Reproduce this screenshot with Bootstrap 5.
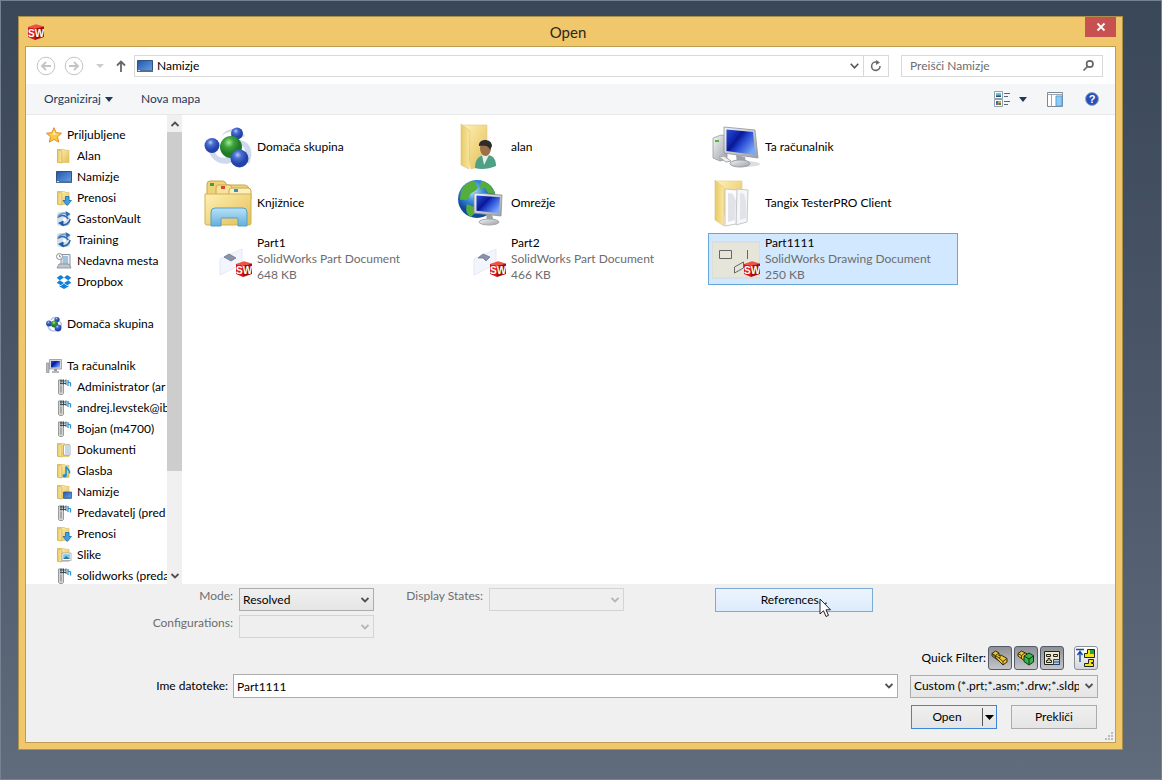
<!DOCTYPE html>
<html lang="sl">
<head>
<meta charset="utf-8">
<meta name="viewport" content="width=device-width, initial-scale=1">
<title>Open</title>
<link rel="stylesheet" href="https://cdn.jsdelivr.net/npm/bootstrap@5.3.0/dist/css/bootstrap.min.css">
<style>
  body { font: 12px/16px Lato, "Open Sans", sans-serif; color: #000; background: linear-gradient(#3a4759, #4d596b 55%, #606b7b) #4d596b; border: 1px solid #758291; }
  svg { display: block; flex: none; overflow: visible; }
  .desk { height: calc(100vh - 2px); padding: 15px 38px 29px 17px; }
  .win { background: #f0c76b; border: 1px solid #ad8f4c; padding: 0 6px 6px; }
  .titlebar { height: 29px; padding-left: 3px; }
  .titlebar h1 { font-size: 15px; line-height: 20px; color: #2c261b; }
  .close-x { width: 31px; height: 20px; background: #c75050; border: 0; right: 0; top: 0; }
  .client { border: 1px solid #bd9d53; background: #fff; }
  .address { height: 37px; padding: 0 12px 0 10px; }
  .box { border: 1px solid #d9d9d9; height: 22px; }
  .crumb { gap: 4px; padding-left: 2px; }
  .refresh { border: 0; border-left: 1px solid #d9d9d9; width: 25px; background: #fff; }
  .plain { border: 0; background: none; padding: 0; color: inherit; }
  .searchbox { width: 202px; margin-left: 12px; }
  .searchbox input { width: 100%; min-width: 0; border: 0; outline: 0; padding: 0 0 0 8px; color: #6d6d6d; }
  .searchbox input::placeholder { color: #6d6d6d; opacity: 1; }
  .tools { height: 31px; background: #f5f6f7; border-bottom: 1px solid #e6e8ea; color: #1e395b; padding: 0 16px 0 18px; }
  .browse { min-height: 0; flex: 1 1 0; }
  .side { width: 141px; padding: 9px 0 0 20px; }
  .side a { height: 21px; gap: 5px; color: #000; text-decoration: none; white-space: nowrap; }
  .side .sub { padding-left: 10px; }
  .gap-row { height: 21px; }
  .scroller { width: 15px; background: #f0f0f0; }
  .scroller .thumb { background: #cdcdcd; height: 78%; }
  .scroller button { height: 17px; }
  .files { grid-template-columns: repeat(auto-fill, 250px); gap: 4px; padding: 6px 0 0 18px; display: grid; align-content: start; }
  .files a { height: 52px; gap: 5px; padding-left: 3px; border: 1px solid transparent; color: #000; text-decoration: none; }
  .files a.picked { background: #d1e8ff; border-color: #66a7d8; }
  .files span { color: #6d6d6d; }
  .files b { font-weight: 400; color: #000; display: block; }
  .panel { background: #f0f0f0; padding: 4px 17px 13px 0; }
  .opts { display: grid; grid-template-columns: 207px 135px 103px 135px 79px 158px; column-gap: 6px; row-gap: 3px; align-items: start; }
  .opts label { text-align: right; color: #6d6d6d; }
  .ctl { display: block; height: 23px; width: 100%; border: 1px solid #acacac; border-radius: 0; padding: 0 18px 0 3px; color: #000; appearance: none; background: url("data:image/svg+xml,%3Csvg xmlns='http://www.w3.org/2000/svg' viewBox='0 0 8 6'%3E%3Cpath d='M.5 1 4 4.500 7.500 1' fill='none' stroke='%23505050' stroke-width='1.800'/%3E%3C/svg%3E") no-repeat right 4px center / 8px 6px, linear-gradient(#f0f0f0, #e5e5e5); }
  .ctl:disabled { opacity: 1; border-color: #d4d4d4; background: url("data:image/svg+xml,%3Csvg xmlns='http://www.w3.org/2000/svg' viewBox='0 0 8 6'%3E%3Cpath d='M.5 1 4 4.500 7.500 1' fill='none' stroke='%23b5b5b5' stroke-width='1.800'/%3E%3C/svg%3E") no-repeat right 4px center / 8px 6px #efefef; }
  input.ctl { height: 24px; background: url("data:image/svg+xml,%3Csvg xmlns='http://www.w3.org/2000/svg' viewBox='0 0 8 6'%3E%3Cpath d='M.5 1 4 4.500 7.500 1' fill='none' stroke='%23505050' stroke-width='1.800'/%3E%3C/svg%3E") no-repeat right 4px center / 8px 6px #fff; }
  .push { height: 24px; border: 1px solid #acacac; background: linear-gradient(#f0f0f0, #e5e5e5); padding: 0; color: #000; }
  .push.hot { border-color: #7eaad8; background: linear-gradient(#ecf4fc, #dcecfc); }
  .pair { width: 86px; }
  .pair.main { border-color: #3c86d8; }
  .pair.main .cut { width: 14px; height: 18px; border-left: 1px solid #555; }
  .actions { gap: 14px; padding: 7px 1px 0 0; }
  .toggles { gap: 2px; }
  .tog { width: 24px; height: 24px; border: 1px solid #555b66; border-radius: 3px; background: linear-gradient(#8e9198, #c3c5c9); padding: 0; display: flex; align-items: center; justify-content: center; }
  .tog.off { background: linear-gradient(#fff, #d3d6dc); border-color: #8b9098; }
  .row-name { padding-top: 4px; }
  .name-label { width: 207px; padding-right: 5px; text-align: right; }
  .filter { width: 188px; margin-left: 12px; }
  .cursor { left: 104px; top: 10px; }
  .grip { right: 2px; bottom: 2px; }
</style>
</head>
<body class="min-vh-100">
<svg width="0" height="0" class="position-absolute" aria-hidden="true">
  <defs>
    <linearGradient id="gy" x2="1" y2="1"><stop stop-color="#fff0b4"/><stop offset="1" stop-color="#e3bf55"/></linearGradient>
    <linearGradient id="gy2"><stop stop-color="#e9c964"/><stop offset="1" stop-color="#f9e9a4"/></linearGradient>
    <linearGradient id="gs" x2="1" y2=".7"><stop stop-color="#2a50d8"/><stop offset=".38" stop-color="#0b1fa6"/><stop offset=".42" stop-color="#0a1790"/><stop offset=".6" stop-color="#2447d4"/><stop offset="1" stop-color="#7aa6f5"/></linearGradient>
    <linearGradient id="gd" x2="1" y2="1"><stop stop-color="#2456a8"/><stop offset="1" stop-color="#69a2e8"/></linearGradient>
    <linearGradient id="gm" x2="1" y2="1"><stop stop-color="#f4f5f6"/><stop offset="1" stop-color="#9ba0a6"/></linearGradient>
    <linearGradient id="gl" x2="0" y2="1"><stop stop-color="#b9e2f6"/><stop offset="1" stop-color="#62b0df"/></linearGradient>
    <radialGradient id="bb" cx=".4" cy=".3"><stop stop-color="#b5c8f5"/><stop offset=".4" stop-color="#4a6fd4"/><stop offset="1" stop-color="#2443a8"/></radialGradient>
    <radialGradient id="bg" cx=".4" cy=".3"><stop stop-color="#a8e79b"/><stop offset=".45" stop-color="#3da53c"/><stop offset="1" stop-color="#1f7a28"/></radialGradient>
    <radialGradient id="be" cx=".4" cy=".3"><stop stop-color="#b4e6fb"/><stop offset=".5" stop-color="#3f8fdc"/><stop offset="1" stop-color="#114a9c"/></radialGradient>
  </defs>
  <symbol id="sw" viewBox="0 0 16 16"><path d="M0 3 8 .2 16 2.500 7 4.500z" fill="#f0503f"/><path d="M0 3 7 4.500V16L0 13z" fill="#d41a14"/><path d="M7 4.500 16 2.500V13l-9 3z" fill="#a80d0d"/><text x="0" y="13" font-size="10" font-weight="700" fill="#fff" font-family="Liberation Sans">S</text><text x="6.800" y="13" font-size="10" font-weight="700" fill="#fff" font-family="Liberation Sans">W</text></symbol>
  <symbol id="fold" viewBox="0 0 16 16"><path d="M1.500 1.500 6 1v14l-4.500-.7z" fill="#d9b64e"/><path d="M3 1.500h5.500l1 .8h3.500v12.200H5z" fill="url(#gy)" stroke="#d9bb5f" stroke-width=".6"/><path d="M1.500 1.500 5.800 3v12l-4.300-.7z" fill="url(#gy2)" stroke="#c9a443" stroke-width=".6"/></symbol>
  <symbol id="desk" viewBox="0 0 16 16"><path d="M.5 2.500h15v11H.5z" fill="url(#gd)" stroke="#32537f"/><path d="M0 12h16v2H0z" fill="#54708e"/><path d="M1 12.500h2" stroke="#c6e0ee"/></symbol>
  <symbol id="down" viewBox="0 0 16 16"><use href="#fold"/><path d="M9.500 6.500h3.500v4h2.500L11.200 15.500 7 10.500h2.500z" fill="#3da0e8" stroke="#1a6cae" stroke-width=".8"/></symbol>
  <symbol id="vault" viewBox="0 0 16 16"><rect x="1" y="1" width="13" height="14" rx="3" fill="#d0e0ef"/><path d="M2 7a6 5 0 0 1 9-4" fill="none" stroke="#7398c0" stroke-width="1.600"/><path d="M9.500 0 14.500 3l-4 3z" fill="#2c6cb4"/><path d="M3 6c3-3 8-1 9 2M14 8a6.500 6 0 0 1-8.500 5.500" fill="none" stroke="#2f67aa" stroke-width="1.600"/><path d="M7.500 9.500v6L2 12z" fill="#1e5ba3"/><circle cx="8.500" cy="8.500" r="1.800" fill="#fff"/></symbol>
  <symbol id="recent" viewBox="0 0 16 16"><path d="M5 1.500h9v12H5z" fill="#eef3f7" stroke="#8c9299"/><path d="M6.500 4H12M6.500 6H12M6.500 8H12M6.500 10H12" stroke="#5b8fc0"/><path d="M3 11h10l2 4H1z" fill="#bfc7cc" stroke="#868d92" stroke-width=".8"/><circle cx="3.500" cy="3.500" r="3" fill="#fff" stroke="#8b8f94"/><path d="M3.500 1.800v1.900h1.500" fill="none" stroke="#666" stroke-width=".7"/></symbol>
  <symbol id="drop" viewBox="0 0 16 16"><path d="M4.700 1 8 3.500 3.800 6.200.7 3.800zM11.300 1 8 3.500l4.200 2.700 3.100-2.400zM.7 8.700l3.100-2.500L8 8.900l-3.300 2.300zM15.300 8.700l-3.100-2.500L8 8.900l3.300 2.300zM8 9.700l3.400 2.400 1.100-.7v1L8 15l-4.500-2.600v-1l1.100.7z" fill="#1081de"/></symbol>
  <symbol id="star" viewBox="0 0 16 16"><path d="m8 .7 2.200 5 5.300.5-4 3.600 1.200 5.300L8 12.400l-4.700 2.700 1.200-5.300-4-3.600 5.300-.5z" fill="#fcca3e" stroke="#e08b24"/><path d="m8 3 1.500 3.700 3.400.2-4.900 1-3.500-.9 2.300-.3z" fill="#ffeb9b"/></symbol>
  <symbol id="home" viewBox="0 0 48 48"><path d="M18 13C21 4 36 4 41 13l-4 2C34 8 23 7 18 13zM4 24c2 17 18 20 26 14l-5-5c-6 4-14 1-15-7zM36 17c11 2 14 12 9 24l-6-6c3-7 3-11-3-13z" fill="#c3cfe8" opacity=".8"/><circle cx="33" cy="10.500" r="6" fill="url(#bb)"/><circle cx="8" cy="22.500" r="7.500" fill="url(#bb)"/><circle cx="27" cy="24" r="11" fill="url(#bg)"/><circle cx="35.500" cy="35.500" r="9" fill="url(#bb)"/></symbol>
  <symbol id="homes" viewBox="0 0 16 16"><path d="M5 4c2-4 8-3 8 1M2 10c1 5 6 6 9 4M13 5c3 2 3 5 1 8" fill="none" stroke="#b7c6e6" stroke-width="1.500"/><circle cx="11" cy="3.500" r="2.600" fill="url(#bb)"/><circle cx="3" cy="7.500" r="2.900" fill="url(#bb)"/><circle cx="8.500" cy="8" r="3.600" fill="url(#bg)"/><circle cx="12" cy="12" r="3.400" fill="url(#bb)"/></symbol>
  <symbol id="pc" viewBox="0 0 48 48"><ellipse cx="33" cy="41" rx="15" ry="3" fill="#bcbcbc" opacity=".5"/><path d="m1 15 8-3 6 1v23l-7 2-7-3z" fill="url(#gm)" stroke="#8b9095" stroke-width=".7"/><path d="M3 18h4" stroke="#4cb83c" stroke-width="2"/><path d="m12 33 7 5-5 1-7-5z" fill="#eee" stroke="#aaa"/><path d="m24 32 9 2 1 6h-9z" fill="#9ea3a8"/><ellipse cx="28" cy="40.500" rx="10" ry="3.500" fill="url(#gm)" stroke="#9aa0a5"/><path d="m12 4 31 3 3 28-34-5z" fill="url(#gm)" stroke="#8d9297" stroke-width=".8"/><path d="m14.500 6.500 26.500 2.500 2.500 23L14.500 28z" fill="url(#gs)"/></symbol>
  <symbol id="pcs" viewBox="0 0 16 16"><path d="M.5 5h2.500v9.500H.5z" fill="#b7bcc1" stroke="#787e83" stroke-width=".6"/><path d="M3.500 1.500h12v9.500h-12z" fill="#d6dade" stroke="#8f969c" stroke-width=".8"/><path d="M5 3h9v6.500H5z" fill="url(#gs)"/><path d="M8 11h3v2H8z" fill="#999"/><path d="M6 13h7v2H6z" fill="#b5b9be"/></symbol>
  <symbol id="dev" viewBox="0 0 16 16"><path d="M2.500 1h5v13.500l-1 1h-3l-1-1z" fill="#d4d4d2" stroke="#858585" stroke-width=".8"/><path d="M5 6.500v7" stroke="#9a9a9a" stroke-width="1.500"/><path d="M4 2h6M4 4.500h6M5 .5v5M7.500.5v5M10 .5V6" stroke="#31434f" stroke-width=".9"/><path d="M8 3h3" stroke="#77b9dc"/><path d="M12 7V1M12 3l2.500 1v3.500" fill="none" stroke="#2e92d2" stroke-width="1.300"/></symbol>
  <symbol id="docs" viewBox="0 0 16 16"><use href="#fold"/><path d="M7.500 3h6.500v10H7.500z" fill="#fff" stroke="#8f9fae" stroke-width=".8"/><path d="M9 5h4M9 7h4M9 9h4M9 11h4" stroke="#6a99cf" stroke-width=".8"/></symbol>
  <symbol id="music" viewBox="0 0 16 16"><use href="#fold"/><path d="M10 12.500V3.500c1 3 4.500 3 3.500 7" fill="none" stroke="#2291cf" stroke-width="1.600"/><ellipse cx="8.700" cy="12.800" rx="2.200" ry="1.800" fill="#2291cf"/></symbol>
  <symbol id="folddesk" viewBox="0 0 16 16"><use href="#fold"/><path d="M7.500 8h8v6h-8z" fill="url(#gd)" stroke="#365b90" stroke-width=".8"/><path d="M7.500 13.500h8v1.500h-8z" fill="#587ba3"/></symbol>
  <symbol id="pics" viewBox="0 0 16 16"><use href="#fold"/><path d="M6 6h9v7.500H6z" fill="#fff" stroke="#9aa5ad" stroke-width=".8"/><path d="M7.200 7.200h6.600V12H7.200z" fill="#7bc4ea"/><path d="m7.200 12 3-3 3.600 3z" fill="#35749a"/></symbol>
  <symbol id="user" viewBox="0 0 48 48"><path d="M5 2h24v40l-16 4z" fill="url(#gy)" stroke="#e1cb83" stroke-width=".6"/><path d="m3 1 9 7-1 38L3 42z" fill="url(#gy2)" stroke="#dcc173" stroke-width=".6"/><path d="M17 45c0-9 4-12 9-13h4c6 1 8 5 8 11-7 3-15 4-21 2z" fill="#4ea184"/><path d="m24 32 2 10 5-10-3-2z" fill="#e7efea"/><ellipse cx="27.500" cy="25.500" rx="5.500" ry="7.500" fill="#9c7048"/><path d="M21 23c-1-8 13-8 13 0l-2 4c-1-4-4-5-11-4z" fill="#2c2c2c"/></symbol>
  <symbol id="net" viewBox="0 0 48 48"><circle cx="19" cy="20" r="19" fill="url(#be)"/><path d="M3 12C7 4 14 2 17 2c-1 4 5 4 2 8s-7 3-8 8-6 2-9 3zM23 2c8 1 13 8 14 13l-7-1-3-5-5 1zM9 25l7 3 1 6-4 4c-4-2-6-6-4-13z" fill="#55ad3b"/><path d="m28 35 6 1 2 6h-7z" fill="#9ea3a8"/><ellipse cx="31" cy="43" rx="10" ry="3" fill="url(#gm)" stroke="#a4a8ac"/><path d="m16 14 28 2-1 21-27-3z" fill="url(#gm)" stroke="#8d9297" stroke-width=".8"/><path d="m18.500 16.500 23.500 1.700-1 16-22.500-2.500z" fill="url(#gs)"/></symbol>
  <symbol id="libs" viewBox="0 0 48 48"><path d="M3 5q0-3 3-3h13q2 0 4 4h18q4 1 4 4v30H3z" fill="#efd37a" stroke="#caa64a"/><path d="M12 9q0-3 2-3h12l4 5h15v8H12z" fill="#f6e29a" stroke="#caa64a"/><path d="M25 12q0-3 2-3h17q3 0 3 3v8H25z" fill="#fbefc0" stroke="#caa64a"/><path d="M6 4h4v3H6z" fill="#4b9b46"/><path d="M17 7h4v3h-4z" fill="#cf4a35"/><path d="M30 10h4v3h-4z" fill="#3b8ec4"/><path d="M1 15h46v29q0 2-2 2H3q-2 0-2-2z" fill="url(#gy)" stroke="#d3b04f"/><path d="M7 47V33q0-4 4-4h28q4 0 4 4v14H34v-7q0-1-1-1H18q-1 0-1 1v7z" fill="url(#gl)" stroke="#579fc7"/></symbol>
  <symbol id="papers" viewBox="0 0 48 48"><path d="M5 2h25v37l-15 5z" fill="url(#gy)" stroke="#e1cb83" stroke-width=".6"/><path d="m24 10 12 1-1 32-11 3z" fill="#f6f6f8" stroke="#c6c8cc"/><path d="m13 10 12 1-1 34-11 2z" fill="#fcfcfd" stroke="#c6c8cc"/><path d="m16 14 5 1 3 7-1 19-7 2zM28 14l4 1 2 7v17l-6 2z" fill="#e1e3e8"/><path d="m3 1 9 8v38l-9-6z" fill="url(#gy2)" stroke="#dcc173" stroke-width=".6"/></symbol>
  <symbol id="part" viewBox="0 0 48 48"><path d="m16 24 22-10v15L16 40z" fill="#f2f5fc" stroke="#dce4f4" stroke-width=".8"/><path d="m20 22 5-3 7 4-5 3z" fill="#8a93ab" stroke="#6f7890" stroke-width=".8"/><use href="#sw" x="32" y="26" width="16" height="16"/></symbol>
  <symbol id="part2" viewBox="0 0 48 48"><path d="m16 24 22-10v15L16 40z" fill="#f2f5fc" stroke="#dce4f4" stroke-width=".8"/><path d="m20 23 5-4 7 3-4 4-3-3z" fill="#8a93ab" stroke="#6f7890" stroke-width=".8"/><use href="#sw" x="32" y="26" width="16" height="16"/></symbol>
  <symbol id="drawing" viewBox="0 0 48 48"><path d="M0 7h48v36H0z" fill="#e5e5da" stroke="#d5d8d2"/><path d="M7.500 15.500h12v8h-12zM35.500 15v9M22.500 32l9-5v6l-9 5z" fill="none" stroke="#666"/><use href="#sw" x="32" y="26" width="16" height="16"/></symbol>
</svg>

<div class="desk d-flex flex-column">
<main class="win d-flex flex-column flex-grow-1">
  <header class="titlebar position-relative d-flex align-items-center">
    <svg width="16" height="16"><use href="#sw"/></svg>
    <h1 class="flex-grow-1 text-center m-0 fw-normal pe-4">Open</h1>
    <button class="close-x position-absolute d-flex align-items-center justify-content-center p-0" aria-label="Close"><svg width="8" height="8"><path d="m.5.5 7 7m0-7-7 7" stroke="#fff" stroke-width="1.800"/></svg></button>
  </header>
  <div class="client d-flex flex-column flex-grow-1">
    <div class="address d-flex align-items-center">
      <button class="plain" aria-label="Back"><svg width="20" height="20" fill="none" stroke="#c4c4c4"><circle cx="10" cy="10" r="8.800"/><path d="M15 10H6m4-4-4 4 4 4" stroke-width="1.800"/></svg></button>
      <button class="plain ms-2" aria-label="Forward"><svg width="20" height="20" fill="none" stroke="#c4c4c4"><circle cx="10" cy="10" r="8.800"/><path d="M5 10h9m-4-4 4 4-4 4" stroke-width="1.800"/></svg></button>
      <button class="plain px-2 ms-1" aria-label="Recent"><svg width="8" height="4"><path d="M0 0h8L4 4z" fill="#ccc"/></svg></button>
      <button class="plain ms-1 me-2" aria-label="Up"><svg width="10" height="12" fill="none" stroke="#666" stroke-width="1.800"><path d="M5 12V1.500M1 5.500l4-4 4 4"/></svg></button>
      <div class="box crumb d-flex align-items-center flex-grow-1">
        <svg width="16" height="16"><use href="#desk"/></svg>
        <span class="flex-grow-1">Namizje</span>
        <button class="plain" aria-label="History"><svg width="9" height="6"><path d="m.7.8 3.800 4L8.300.8" fill="none" stroke="#555" stroke-width="1.600"/></svg></button>
        <button class="refresh h-100 d-flex align-items-center justify-content-center p-0" aria-label="Refresh"><svg width="12" height="12"><path d="M7 2H5.500a4.200 4.200 0 1 0 4.500 4" fill="none" stroke="#6b6b6b" stroke-width="1.600"/><path d="M6 0v5l4-2.500z" fill="#6b6b6b"/></svg></button>
      </div>
      <div class="box searchbox d-flex align-items-center">
        <input type="search" placeholder="Preišči Namizje" aria-label="Preišči Namizje">
        <svg class="me-2" width="11" height="11" fill="none" stroke="#666" stroke-width="1.700"><circle cx="6.800" cy="4" r="3.200"/><path d="m4.500 6.500-4 4"/></svg>
      </div>
    </div>
    <div class="tools d-flex align-items-center">
      <button class="plain d-flex align-items-center gap-1">Organiziraj <svg width="8" height="5"><path d="M0 0h8L4 5z" fill="#1e395b"/></svg></button>
      <button class="plain mx-4 ps-1">Nova mapa</button>
      <button class="plain ms-auto d-flex align-items-center gap-2" aria-label="View"><svg width="17" height="16"><path d="M.5.500h8v7h-8zM.5 8.500h8v7h-8z" fill="#fff" stroke="#93a0ab"/><path d="M2 2h5v3.500H2z" fill="#6cc0d0"/><path d="M2 4.500h5V6H2z" fill="#254f72"/><path d="M2 10h2.500v2H2z" fill="#3867ae"/><path d="M4.500 10H7v2H4.500z" fill="#d2a335"/><path d="M2 12h2.500v2H2z" fill="#a14f75"/><path d="M4.500 12H7v2H4.500z" fill="#35894a"/><path d="M10 2.500h6M10 5.500h4M10 10.500h6M10 13.500h4" stroke="#56697f"/></svg><svg width="8" height="5"><path d="M0 0h8L4 5z" fill="#1e395b"/></svg></button>
      <button class="plain ms-3 me-3 ps-1 pe-1" aria-label="Preview pane"><svg width="18" height="15"><path d="M.5.500h15v14H.5z" fill="#fff" stroke="#7c8791"/><path d="M0 2.500h16M4.500 3v12" stroke="#9aa5af"/><path d="M9 4h6v10H9z" fill="#8dccf7" stroke="#5a9fd6"/></svg></button>
      <button class="plain" aria-label="Help"><svg width="14" height="14"><circle cx="7" cy="7" r="6.500" fill="#2a50b8" stroke="#9aa7c4"/><text x="7" y="11" text-anchor="middle" font-size="11" font-weight="700" fill="#fff" font-family="Liberation Sans">?</text></svg></button>
    </div>
    <div class="browse d-flex overflow-hidden">
      <nav class="side flex-shrink-0 overflow-hidden">
        <a href="#" class="d-flex align-items-center"><svg width="16" height="16"><use href="#star"/></svg>Priljubljene</a>
        <a href="#" class="sub d-flex align-items-center"><svg width="16" height="16"><use href="#fold"/></svg>Alan</a>
        <a href="#" class="sub d-flex align-items-center"><svg width="16" height="16"><use href="#desk"/></svg>Namizje</a>
        <a href="#" class="sub d-flex align-items-center"><svg width="16" height="16"><use href="#down"/></svg>Prenosi</a>
        <a href="#" class="sub d-flex align-items-center"><svg width="16" height="16"><use href="#vault"/></svg>GastonVault</a>
        <a href="#" class="sub d-flex align-items-center"><svg width="16" height="16"><use href="#vault"/></svg>Training</a>
        <a href="#" class="sub d-flex align-items-center"><svg width="16" height="16"><use href="#recent"/></svg>Nedavna mesta</a>
        <a href="#" class="sub d-flex align-items-center"><svg width="16" height="16"><use href="#drop"/></svg>Dropbox</a>
        <div class="gap-row"></div>
        <a href="#" class="d-flex align-items-center"><svg width="16" height="16"><use href="#homes"/></svg>Domača skupina</a>
        <div class="gap-row"></div>
        <a href="#" class="d-flex align-items-center"><svg width="16" height="16"><use href="#pcs"/></svg>Ta računalnik</a>
        <a href="#" class="sub d-flex align-items-center"><svg width="16" height="16"><use href="#dev"/></svg>Administrator (ar</a>
        <a href="#" class="sub d-flex align-items-center"><svg width="16" height="16"><use href="#dev"/></svg>andrej.levstek@ib</a>
        <a href="#" class="sub d-flex align-items-center"><svg width="16" height="16"><use href="#dev"/></svg>Bojan (m4700)</a>
        <a href="#" class="sub d-flex align-items-center"><svg width="16" height="16"><use href="#docs"/></svg>Dokumenti</a>
        <a href="#" class="sub d-flex align-items-center"><svg width="16" height="16"><use href="#music"/></svg>Glasba</a>
        <a href="#" class="sub d-flex align-items-center"><svg width="16" height="16"><use href="#folddesk"/></svg>Namizje</a>
        <a href="#" class="sub d-flex align-items-center"><svg width="16" height="16"><use href="#dev"/></svg>Predavatelj (pred</a>
        <a href="#" class="sub d-flex align-items-center"><svg width="16" height="16"><use href="#down"/></svg>Prenosi</a>
        <a href="#" class="sub d-flex align-items-center"><svg width="16" height="16"><use href="#pics"/></svg>Slike</a>
        <a href="#" class="sub d-flex align-items-center"><svg width="16" height="16"><use href="#dev"/></svg>solidworks (preda</a>
      </nav>
      <div class="scroller d-flex flex-column flex-shrink-0">
        <button class="plain d-flex align-items-center justify-content-center" aria-label="Scroll up"><svg width="8" height="6"><path d="M.5 5 4 1.500 7.500 5" fill="none" stroke="#505050" stroke-width="1.800"/></svg></button>
        <div class="flex-grow-1"><div class="thumb"></div></div>
        <button class="plain d-flex align-items-center justify-content-center" aria-label="Scroll down"><svg width="8" height="6"><path d="M.5 1 4 4.500 7.500 1" fill="none" stroke="#505050" stroke-width="1.800"/></svg></button>
      </div>
      <section class="files flex-grow-1">
        <a href="#" class="d-flex align-items-center"><svg width="48" height="48"><use href="#home"/></svg><b>Domača skupina</b></a>
        <a href="#" class="d-flex align-items-center"><svg width="48" height="48"><use href="#user"/></svg><b>alan</b></a>
        <a href="#" class="d-flex align-items-center"><svg width="48" height="48"><use href="#pc"/></svg><b>Ta računalnik</b></a>
        <a href="#" class="d-flex align-items-center"><svg width="48" height="48"><use href="#libs"/></svg><b>Knjižnice</b></a>
        <a href="#" class="d-flex align-items-center"><svg width="48" height="48"><use href="#net"/></svg><b>Omrežje</b></a>
        <a href="#" class="d-flex align-items-center"><svg width="48" height="48"><use href="#papers"/></svg><b>Tangix TesterPRO Client</b></a>
        <a href="#" class="d-flex align-items-center"><svg width="48" height="48"><use href="#part"/></svg><span><b>Part1</b>SolidWorks Part Document<br>648 KB</span></a>
        <a href="#" class="d-flex align-items-center"><svg width="48" height="48"><use href="#part2"/></svg><span><b>Part2</b>SolidWorks Part Document<br>466 KB</span></a>
        <a href="#" class="picked d-flex align-items-center"><svg width="48" height="48"><use href="#drawing"/></svg><span><b>Part1111</b>SolidWorks Drawing Document<br>250 KB</span></a>
      </section>
    </div>
    <form class="panel position-relative" onsubmit="return false">
      <div class="opts">
        <label for="mode">Mode:</label>
        <select id="mode" class="ctl"><option>Resolved</option></select>
        <label for="disp">Display States:</label>
        <select id="disp" class="ctl" disabled></select>
        <span></span>
        <div class="position-relative">
          <button class="push hot w-100">References...</button>
          <svg class="cursor position-absolute" width="14" height="20"><path d="M1 1v15l3.500-3.200 2.500 5.700 2.500-1.100L7 11.800h4.500z" fill="#fff" stroke="#222"/></svg>
        </div>
        <label for="conf">Configurations:</label>
        <select id="conf" class="ctl" disabled></select>
      </div>
      <div class="toggles d-flex align-items-center justify-content-end mt-2">
        <span>Quick Filter:</span>
        <button class="tog" aria-label="Parts"><svg width="18" height="18"><path d="M1 4.500 4.500 2 8 4v3l2-1 6 3.500V13l-4 3-4-4z" fill="#edc531" stroke="#332b0a"/><path d="M1 4.500V7l7 5M1 4.500 4.500 6.500 8 4M4.500 6.500 8 9l2-1.500M8 9l4 3.500 4-3M12 12.500V16M4.500 6.500V9" fill="none" stroke="#332b0a" stroke-width=".9"/></svg></button>
        <button class="tog" aria-label="Assemblies"><svg width="18" height="18"><path d="M1 4.500 4.500 2l6 3v8L8 12 1 7z" fill="#edc531" stroke="#332b0a"/><path d="M1 4.500 4.500 6.500 8 4M4.500 6.500V9" fill="none" stroke="#332b0a" stroke-width=".9"/><path d="m7 7 5-3 4.500 2.500V13L12 16l-5-3.500z" fill="#38b44a" stroke="#12351a"/><path d="m7 7 5 3 4.500-3M12 10v6" fill="none" stroke="#12351a"/></svg></button>
        <button class="tog" aria-label="Drawings"><svg width="18" height="18"><path d="M1.500 2.500h15v13h-15z" fill="#efe9c8" stroke="#222"/><path d="M3.500 5.500h4v2h-4zM10.500 5.500h4v2h-4zM3.500 13.500v-2h1.500v-2h2v2h1.500v2z" fill="#f5e77c" stroke="#222"/><path d="M10.500 10.500h6v5h-6z" fill="#b9cdea" stroke="#26436f"/><path d="M11 13h5" stroke="#26436f"/></svg></button>
        <button class="tog off ms-2" aria-label="Top-level assemblies"><svg width="20" height="20"><path d="M0 1.500h8M4 14V4M1.500 7 4 3.500 6.500 7" fill="none" stroke="#174ca0" stroke-width="1.400"/><path d="M8.500 9.500v-4h3v-4h7v8z" fill="#f3e21d" stroke="#222"/><path d="M14 2h4v4h-4z" fill="#28a23b"/><path d="M8.500 18.500v-3h4v-4h5v3h-2v1h2v3z" fill="#f3e21d" stroke="#222"/></svg></button>
      </div>
      <div class="row-name d-flex align-items-center">
        <label class="name-label" for="fname">Ime datoteke:</label>
        <div class="flex-grow-1"><input id="fname" class="ctl" type="text" value="Part1111"></div>
        <div class="filter"><select class="ctl" aria-label="File type"><option>Custom (*.prt;*.asm;*.drw;*.sldprt;*.sldasm)</option></select></div>
      </div>
      <div class="actions d-flex justify-content-end">
        <button class="push pair main d-flex align-items-center"><span class="flex-grow-1">Open</span><span class="cut d-flex align-items-center justify-content-center"><svg width="9" height="5"><path d="M0 0h9L4.500 5z"/></svg></span></button>
        <button class="push pair">Prekliči</button>
      </div>
      <svg class="grip position-absolute" width="8" height="8" fill="#bcbcbc"><path d="M6 0h2v2H6zM3 3h2v2H3zM6 3h2v2H6zM0 6h2v2H0zM3 6h2v2H3zM6 6h2v2H6z"/></svg>
    </form>
  </div>
</main>
</div>
<script src="https://cdn.jsdelivr.net/npm/bootstrap@5.3.0/dist/js/bootstrap.bundle.min.js"></script>
</body>
</html>
